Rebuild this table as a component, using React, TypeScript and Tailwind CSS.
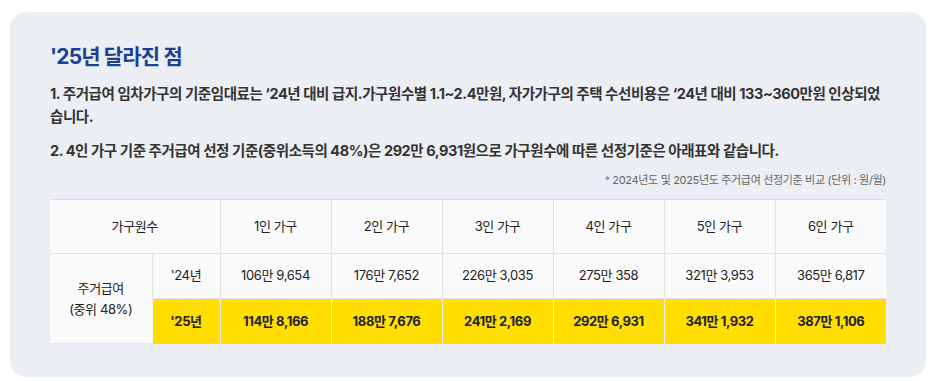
const FONT = { fontFamily: 'Inter, "Noto Sans CJK KR", sans-serif' };

const HOUSEHOLDS = ['1인 가구', '2인 가구', '3인 가구', '4인 가구', '5인 가구', '6인 가구'];
const Y24 = ['106만 9,654', '176만 7,652', '226만 3,035', '275만 358', '321만 3,953', '365만 6,817'];
const Y25 = ['114만 8,166', '188만 7,676', '241만 2,169', '292만 6,931', '341만 1,932', '387만 1,106'];

export default function App() {
  return (
    <div className="min-h-screen bg-white pt-3 pl-2.5 pr-1.5 text-[#333]" style={FONT}>
      <section className="rounded-2xl bg-[#ebeff4] px-10 pt-[30px] pb-[33px]">
        <h2 className="text-[21px] font-bold leading-[30px] tracking-[-0.04em] text-[#1d3f94]">'25년 달라진 점</h2>

        <p className="mt-[10px] text-[14.5px] font-bold leading-[23px] tracking-[-0.03em] text-[#333]">
          1. 주거급여 임차가구의 기준임대료는 ‘24년 대비 급지.가구원수별 1.1~2.4만원, 자가가구의 주택 수선비용은 ‘24년 대비 133~360만원 인상되었습니다.
        </p>
        <p className="mt-[11px] text-[14.5px] font-bold leading-[23px] tracking-[-0.03em] text-[#333]">
          2. 4인 가구 기준 주거급여 선정 기준(중위소득의 48%)은 292만 6,931원으로 가구원수에 따른 선정기준은 아래표와 같습니다.
        </p>

        <p className="mt-[9px] text-right text-[11px] leading-[18px] tracking-[-0.03em] text-[#666]">
          <span className="text-[#3d8bf0]">*</span> 2024년도 및 2025년도 주거급여 선정기준 비교 (단위 : 원/월)
        </p>

        <table className="mt-[10px] w-full table-fixed border-collapse border-t border-[#dcdcdc] text-[13px] tracking-[-0.03em] text-[#222]">
          <colgroup>
            <col className="w-[102px]" />
            <col className="w-[68px]" />
            {HOUSEHOLDS.map((h) => (
              <col key={h} />
            ))}
          </colgroup>
          <thead>
            <tr className="h-[54px] bg-[#fafafa]">
              <th colSpan={2} className="border-b border-[#e2e2e2] font-normal">
                가구원수
              </th>
              {HOUSEHOLDS.map((h) => (
                <th key={h} className="border-b border-l border-[#e2e2e2] font-normal">
                  {h}
                </th>
              ))}
            </tr>
          </thead>
          <tbody>
            <tr className="h-[45px] bg-[#fafafa]">
              <td rowSpan={2} className="border-b border-[#e8e8e8] text-center leading-[21px]">
                주거급여
                <br />
                (중위 48%)
              </td>
              <td className="border-b border-l border-[#e2e2e2] text-center">'24년</td>
              {Y24.map((v) => (
                <td key={v} className="border-b border-l border-[#e2e2e2] text-center">
                  {v}
                </td>
              ))}
            </tr>
            <tr className="h-[45px] bg-[#ffde00] font-bold">
              <td className="border-l border-[#f2f2f2] text-center">'25년</td>
              {Y25.map((v) => (
                <td key={v} className="border-l border-[#f2f2f2] text-center">
                  {v}
                </td>
              ))}
            </tr>
          </tbody>
        </table>
      </section>
    </div>
  );
}
